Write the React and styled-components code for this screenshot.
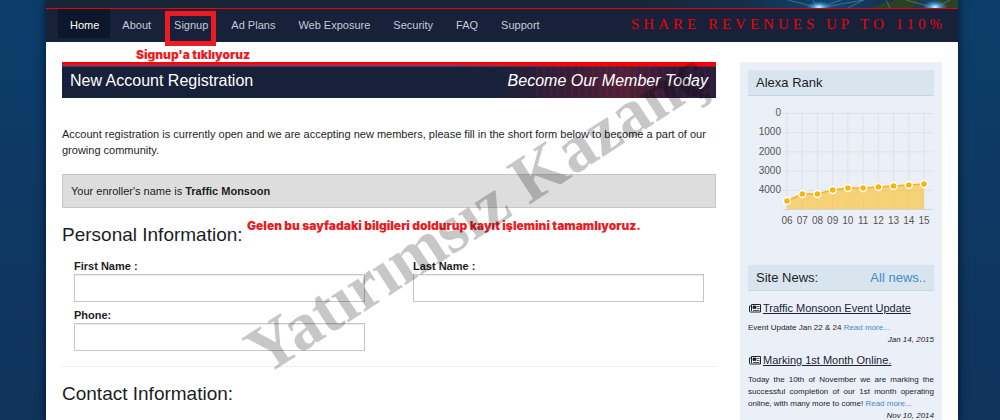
import React from "react";
import styled, { createGlobalStyle } from "styled-components";

const GlobalStyle = createGlobalStyle`
  *, *::before, *::after { box-sizing: border-box; }
  body {
    margin: 0;
    color: #1d1d1f;
    font: 11px/16px "Liberation Sans", Arial, sans-serif;
    overflow: hidden;
  }
  a { color: #428bca; text-decoration: none; }
  h1, h2, h3, p { margin: 0; font-weight: 400; }
`;

const Page = styled.div`
  min-height: 100vh;
  display: flex;
  padding: 0 42px 0 46px;
  background: linear-gradient(#0c3d6a, #10335b);
`;

const Shell = styled.div`
  position: relative;
  flex: 1;
  min-width: 0;
  background: #fff;
  box-shadow: 0 0 8px rgba(0, 8, 24, 0.8);
`;

const Masthead = styled.div`
  display: flex;
  justify-content: flex-end;
  height: 9px;
  background: #182536;
  border-bottom: 1px solid #f00000;
`;

const NavBar = styled.nav`
  display: flex;
  justify-content: space-between;
  height: 33px;
  padding: 0 12px;
  background: #18213a;
`;

const NavList = styled.ul`
  display: flex;
  margin: 0;
  padding: 0;
  list-style: none;
`;

const NavItem = styled.li`
  position: relative;
`;

const NavLink = styled.a`
  display: block;
  padding: 0 11px 0 12px;
  line-height: 32px;
  height: 29px;
  color: ${(p) => (p.$active ? "#fff" : "#c4cad4")};
  background: ${(p) => (p.$active ? "#0d172b" : "transparent")};
`;

const Highlight = styled.span`
  position: absolute;
  inset: 2px 3px -4px;
  border: 5px solid #ed1c24;
  pointer-events: none;
`;

const Slogan = styled.p`
  color: #f00000;
  font: 15px/30px "Liberation Serif", "Times New Roman", serif;
  letter-spacing: 4px;
  white-space: nowrap;
`;

const Columns = styled.div`
  display: grid;
  grid-template-columns: minmax(0, 1fr) 202px;
  gap: 24px;
  padding: 20px 16px 0;
`;

const Main = styled.main`
  position: relative;
`;

const TitleBar = styled.header`
  display: flex;
  justify-content: space-between;
  height: 36px;
  padding: 0 8px;
  color: #fff;
  font-size: 16px;
  line-height: 38px;
  background:
    linear-gradient(90deg, transparent 60%, #ff0000 80%) 0 0 / 100% 4px no-repeat,
    linear-gradient(#ff0000 0 2px, #a82a4c 2px 4px, #6a2744 4px 5px, transparent 5px),
    repeating-linear-gradient(90deg, rgba(255, 90, 90, 0.05) 0 2px, transparent 2px 7px) 100% 0 / 180px 100% no-repeat,
    linear-gradient(90deg, #18213a 66%, #3a1d38 78%, #521f38 86%, #2c1b38 94%, #2a1d3a);
`;

const TitleText = styled.h1`
  font-size: inherit;
`;

const Tagline = styled.em`
  white-space: nowrap;
`;

const Note = styled.p`
  position: absolute;
  left: ${(p) => p.$x}px;
  top: ${(p) => p.$y}px;
  color: #ed1c24;
  font-family: Inter, "Arial Black", sans-serif;
  font-size: 12px;
  font-weight: 900;
  white-space: nowrap;
`;

const Intro = styled.p`
  margin: 28px 0 16px;
`;

const Enroller = styled.p`
  padding: 8px;
  background: #ddd;
  border: 1px solid #c6c6c6;
`;

const SectionTitle = styled.h2`
  padding-top: 14px;
  font-size: 19px;
  line-height: 26px;
`;

const Fields = styled.div`
  display: grid;
  grid-template-columns: 1fr 1fr;
  gap: 5px 48px;
  padding: 10px 12px 15px;
  border-bottom: 1px solid #eee;
`;

const Field = styled.label`
  display: block;
  font-weight: 700;
`;

const TextInput = styled.input`
  display: block;
  width: 100%;
  height: 28px;
  padding: 4px 8px;
  font: inherit;
  background: #fff;
  border: 1px solid #c6c6c6;
  border-radius: 0;
  box-shadow: inset 0 1px 1px rgba(0, 0, 0, 0.08);
`;

const Sidebar = styled.aside`
  padding: 8px 8px 0;
  background: #ebeff7;
`;

const PanelTitle = styled.h2`
  display: flex;
  justify-content: space-between;
  padding: 0 8px;
  font-size: 13px;
  line-height: 25px;
  background: #d8e5ee;
  border-bottom: 1px solid #c8d5e0;
`;

const Chart = styled.svg`
  display: block;
  width: 100%;
  height: 169px;
  font-size: 10px;
`;

const NewsList = styled.div`
  padding-top: 3px;
`;

const NewsItem = styled.article`
  font-size: 8px;
  line-height: 12px;
`;

const NewsTitle = styled.h3`
  display: flex;
  align-items: center;
  gap: 2px;
  padding: 6px 0 6px 1px;
  font-size: 11px;
  line-height: 16px;
`;

const NewsLink = styled.a`
  color: #1d2238;
  text-decoration: underline;
  white-space: nowrap;
`;

const NewsBody = styled.p`
  text-align: justify;
`;

const NewsDate = styled.time`
  display: block;
  text-align: right;
  font-style: italic;
`;

const Watermark = styled.div`
  position: absolute;
  left: 430px;
  top: 212px;
  color: rgba(0, 0, 0, 0.22);
  font: 700 68px/68px "Liberation Serif", "Times New Roman", serif;
  white-space: nowrap;
  transform: translate(-50%, -50%) rotate(-33deg);
  pointer-events: none;
`;

const navItems = ["Home", "About", "Signup", "Ad Plans", "Web Exposure", "Security", "FAQ", "Support"];

const ranks = [
  ["06", 105], ["07", 98], ["08", 98], ["09", 94], ["10", 92],
  ["11", 92], ["12", 91], ["13", 90], ["14", 89], ["15", 88],
];
const chartX = (i) => 39 + (i * 137) / 9;
const rankLine = ranks.map(([, y], i) => `${chartX(i)},${y}`).join(" ");

function Globe() {
  return (
    <svg width="320" height="8" viewBox="0 0 320 8" aria-hidden="true">
      <defs>
        <linearGradient id="sky">
          <stop offset="0" stopColor="#182536" />
          <stop offset=".35" stopColor="#14304c" />
          <stop offset=".6" stopColor="#12456f" />
          <stop offset=".8" stopColor="#143048" />
          <stop offset="1" stopColor="#234a62" />
        </linearGradient>
        <radialGradient id="glint">
          <stop offset="0" stopColor="#f2fcff" />
          <stop offset=".3" stopColor="#58b8f0" />
          <stop offset="1" stopColor="#2878b8" stopOpacity="0" />
        </radialGradient>
      </defs>
      <rect width="320" height="8" fill="url(#sky)" />
      <path d="M235 8l10-5 13-3h24l-8 8zM290 8l5-5 9-3h16v8z" fill="#2c4026" />
      <path d="M150 0l31 8 22-8M175 0l6 8M181 8l45-8M268 0l29 8 15-8M225 0l-15 8M248 0l4 8" fill="none" stroke="#6da4bc" strokeWidth=".7" opacity=".7" />
      <ellipse cx="181" cy="7" rx="13" ry="6" fill="url(#glint)" />
      <ellipse cx="297" cy="7" rx="13" ry="7" fill="url(#glint)" />
    </svg>
  );
}

function NewsIcon() {
  return (
    <svg width="12" height="9" viewBox="0 0 12 9" aria-hidden="true">
      <path d="M2.5.5h9v7.5H1.2Q.5 8 .5 7.2V2h2z" fill="#fff" stroke="#1d2238" />
      <path d="M2.5 2v5" stroke="#1d2238" />
      <path d="M4 2h3v2.500H4zM8 2.500h2.500M8 4.500h2.500M4 6.500h6.500" fill="#1d2238" stroke="#1d2238" strokeWidth=".8" />
    </svg>
  );
}

function RankChart() {
  return (
    <Chart viewBox="0 0 186 169" preserveAspectRatio="xMinYMin meet" role="img" aria-label="Alexa Rank">
      <g stroke="#dfe3e8">
        {[0, 1, 2, 3, 4].map((n) => (
          <line key={n} x1="34" x2="185" y1={17.5 + n * 19.2} y2={17.5 + n * 19.2} />
        ))}
        {ranks.map(([day], i) => (
          <line key={day} x1={chartX(i)} x2={chartX(i)} y1="16" y2="116" />
        ))}
      </g>
      <line x1="35" x2="185" y1="113.500" y2="113.500" stroke="#d0d5dc" />
      <polygon points={`39,113 ${rankLine} 176,113`} fill="#fcc030" fillOpacity=".65" />
      <polyline points={rankLine} fill="none" stroke="#fdb30c" strokeWidth="1.500" />
      {ranks.map(([day, y], i) => (
        <circle key={day} cx={chartX(i)} cy={y} r="3.500" fill="#fdb30c" stroke="#fff" strokeWidth="1.500" />
      ))}
      <g fill="#555" textAnchor="end">
        {[0, 1000, 2000, 3000, 4000].map((v, n) => (
          <text key={v} x="33" y={20 + n * 19.25}>{v}</text>
        ))}
      </g>
      <g fill="#555" textAnchor="middle">
        {ranks.map(([day], i) => (
          <text key={day} x={chartX(i)} y="128">{day}</text>
        ))}
      </g>
    </Chart>
  );
}

function News({ title, date, children }) {
  return (
    <NewsItem>
      <NewsTitle>
        <NewsIcon />
        <NewsLink href="#news">{title}</NewsLink>
      </NewsTitle>
      <NewsBody>
        {children} <a href="#more">Read more...</a>
      </NewsBody>
      <NewsDate>{date}</NewsDate>
    </NewsItem>
  );
}

export default function App() {
  return (
    <Page>
      <GlobalStyle />
      <Shell>
        <Masthead>
          <Globe />
        </Masthead>
        <NavBar>
          <NavList>
            {navItems.map((item) => (
              <NavItem key={item}>
                <NavLink href="#nav" $active={item === "Home"}>{item}</NavLink>
                {item === "Signup" && <Highlight />}
              </NavItem>
            ))}
          </NavList>
          <Slogan>SHARE REVENUES UP TO 110%</Slogan>
        </NavBar>
        <Columns>
          <Main>
            <TitleBar>
              <TitleText>New Account Registration</TitleText>
              <Tagline>Become Our Member Today</Tagline>
            </TitleBar>
            <Intro>
              Account registration is currently open and we are accepting new members, please fill in the short
              form below to become a part of our growing community.
            </Intro>
            <Enroller>
              Your enroller's name is <b>Traffic Monsoon</b>
            </Enroller>
            <SectionTitle>Personal Information:</SectionTitle>
            <Fields>
              <Field>First Name :<TextInput name="first" /></Field>
              <Field>Last Name :<TextInput name="last" /></Field>
              <Field>Phone:<TextInput name="phone" type="tel" /></Field>
            </Fields>
            <SectionTitle>Contact Information:</SectionTitle>
            <Note $x={74} $y={-15}>Signup'a tıklıyoruz</Note>
            <Note $x={185} $y={156}>Gelen bu sayfadaki bilgileri doldurup kayıt işlemini tamamlıyoruz.</Note>
          </Main>
          <Sidebar>
            <PanelTitle>Alexa Rank</PanelTitle>
            <RankChart />
            <PanelTitle>
              Site News: <a href="#all">All news..</a>
            </PanelTitle>
            <NewsList>
              <News title="Traffic Monsoon Event Update" date="Jan 14, 2015">
                Event Update Jan 22 &amp; 24
              </News>
              <News title="Marking 1st Month Online." date="Nov 10, 2014">
                Today the 10th of November we are marking the successful completion of our 1st month operating
                online, with many more to come!
              </News>
            </NewsList>
          </Sidebar>
        </Columns>
        <Watermark aria-hidden="true">Yatırımsız Kazanç</Watermark>
      </Shell>
    </Page>
  );
}
